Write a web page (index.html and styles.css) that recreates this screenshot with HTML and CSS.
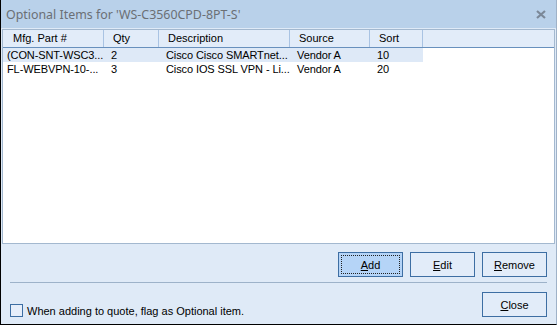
FILE: index.html
```html
<!DOCTYPE html>
<html lang="en">
<head>
    <meta charset="UTF-8">
    <title>Optional Items</title>
    <link rel="stylesheet" href="styles.css">
</head>
<body>
    <div class="window">
        <div class="titlebar">
            <span class="title">Optional Items for 'WS-C3560CPD-8PT-S'</span>
            <svg class="close-x" width="10" height="9" viewBox="0 0 10 9">
                <path d="M1 1 L9 8 M9 1 L1 8" stroke="#7b8898" stroke-width="2.2" fill="none"/>
            </svg>
        </div>

        <div class="content">
            <div class="listview">
                <div class="row header">
                    <div class="cell first">Mfg. Part #</div>
                    <div class="cell">Qty</div>
                    <div class="cell">Description</div>
                    <div class="cell">Source</div>
                    <div class="cell">Sort</div>
                </div>
                <div class="row selected">
                    <div class="cell first">(CON-SNT-WSC3...</div>
                    <div class="cell">2</div>
                    <div class="cell">Cisco Cisco SMARTnet...</div>
                    <div class="cell">Vendor A</div>
                    <div class="cell">10</div>
                </div>
                <div class="row">
                    <div class="cell first">FL-WEBVPN-10-...</div>
                    <div class="cell">3</div>
                    <div class="cell">Cisco IOS SSL VPN - Li...</div>
                    <div class="cell">Vendor A</div>
                    <div class="cell">20</div>
                </div>
            </div>

            <div class="buttons">
                <button class="button default"><span class="focus"><u>A</u>dd</span></button>
                <button class="button"><u>E</u>dit</button>
                <button class="button"><u>R</u>emove</button>
            </div>

            <div class="separator"></div>

            <div class="footer">
                <label class="check">
                    <span class="box"></span>
                    When adding to quote, flag as Optional item.
                </label>
                <button class="button"><u>C</u>lose</button>
            </div>
        </div>
    </div>
</body>
</html>
```

FILE: styles.css
```css
body {
    margin: 0;
    font-family: "Liberation Sans", Arial, sans-serif;
    font-size: 11px;
    color: #000;
    background: #dfeaf7;
}
.window {
    width: 557px;
    height: 325px;
    box-sizing: border-box;
    border-left: 1px solid #000;
    border-right: 1px solid #9fb2c8;
    border-bottom: 1px solid #000;
    background: #dfeaf7;
    display: flex;
    flex-direction: column;
}
.titlebar {
    height: 28px;
    background: #b9d1ea;
    display: flex;
    align-items: center;
    justify-content: space-between;
    padding: 0 10px 0 5px;
    flex-shrink: 0;
}
.title {
    font-family: "Noto Sans", sans-serif;
    font-size: 12.4px;
    color: #6b6f75;
}
.content {
    flex: 1;
    display: flex;
    flex-direction: column;
    padding: 1px 0 0 1px;
}
.listview {
    height: 215px;
    box-sizing: border-box;
    margin-right: 1px;
    border: 1px solid #a3b8cf;
    background: #fff;
}
.row {
    display: grid;
    grid-template-columns: 101px 55px 131px 80px 53px;
    height: 14px;
    line-height: 14px;
    width: 420px;
}
.row .cell {
    padding-left: 7px;
    white-space: nowrap;
    letter-spacing: -0.1px;
}
.row .cell.first {
    padding-left: 4px;
}
.header {
    width: auto;
    height: 17px;
    line-height: 17px;
    background: #e2ecf9;
    border-bottom: 1px solid #6890bd;
}
.header .cell {
    padding-left: 9px;
    box-shadow: inset -1px 0 0 #a9c3e3;
    letter-spacing: 0;
}
.header .cell.first {
    padding-left: 10px;
}
.selected {
    background: #dee9f7;
}
.buttons {
    display: flex;
    justify-content: flex-end;
    gap: 7px;
    margin: 8px 9px 0 0;
}
.button {
    width: 65px;
    height: 25px;
    border: 1px solid #3d6ea3;
    background: #e2ecf9;
    font-family: "Liberation Sans", Arial, sans-serif;
    font-size: 11px;
    color: #000;
    padding: 0;
    border-radius: 0;
}
.button.default {
    background: #b5d4f7;
    padding: 2px;
}
.focus {
    display: flex;
    align-items: center;
    justify-content: center;
    height: 100%;
    border: 1px dotted #222;
    box-sizing: border-box;
}
.separator {
    height: 1px;
    background: #9db2c9;
    margin: 5px 9px 0 8px;
}
.footer {
    display: flex;
    justify-content: space-between;
    align-items: flex-end;
    margin: 9px 9px 0 8px;
}
.check {
    display: flex;
    align-items: center;
    gap: 4px;
}
.box {
    width: 11px;
    height: 11px;
    border: 1px solid #3d6ea3;
    background: #e6eefa;
}
```
